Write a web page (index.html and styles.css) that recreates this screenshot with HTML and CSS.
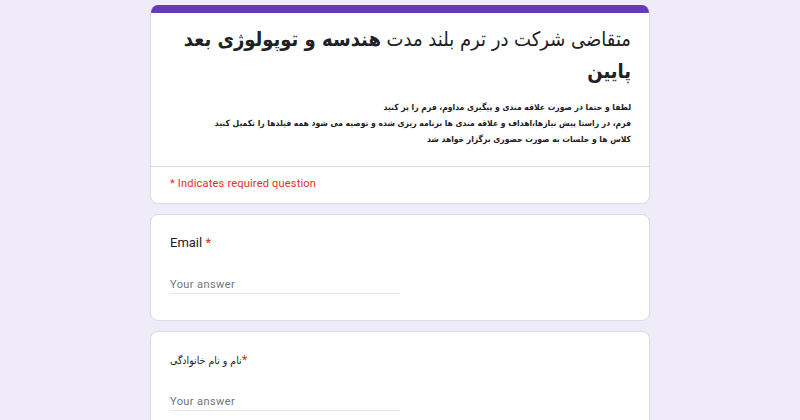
FILE: index.html
```html
<!DOCTYPE html>
<html lang="fa">
<head>
<meta charset="utf-8">
<title>Form</title>
<link rel="stylesheet" href="styles.css">
</head>
<body>
<main class="form">
  <section class="card header-card">
    <div class="accent"></div>
    <div class="header-body">
      <h1 class="title" dir="rtl">متقاضی شرکت در ترم بلند مدت <b>هندسه و توپولوژی بعد پایین</b></h1>
      <div class="desc" dir="rtl">
        <p>لطفا و حتما در صورت علاقه مندی و پیگیری مداوم، فرم را پر کنید</p>
        <p>فرم، در راستا پیش نیازها،اهداف و علاقه مندی ها برنامه ریزی شده و توصیه می شود همه فیلدها را تکمیل کنید</p>
        <p>کلاس ها و جلسات به صورت حضوری برگزار خواهد شد</p>
      </div>
    </div>
    <div class="required-note">* Indicates required question</div>
  </section>

  <section class="card question">
    <div class="label">Email <span class="star">*</span></div>
    <div class="answer"><span class="placeholder">Your answer</span></div>
  </section>

  <section class="card question">
    <div class="label"><span class="fa">نام و نام خانوادگی</span><span class="star">*</span></div>
    <div class="answer"><span class="placeholder">Your answer</span></div>
  </section>
</main>
</body>
</html>
```

FILE: styles.css
```css
html, body {
  margin: 0;
  padding: 0;
}
body {
  background: #f0ebf8;
  font-family: Roboto, "Liberation Sans", sans-serif;
  color: #202124;
  height: 420px;
  overflow: hidden;
}
.form {
  width: 500px;
  margin: 0 auto;
  padding-top: 5px;
  display: flex;
  flex-direction: column;
  gap: 10px;
}
.card {
  background: #fff;
  border: 1px solid #dadce0;
  border-radius: 8px;
  box-sizing: border-box;
}
.header-card {
  overflow: hidden;
  border-top: none;
}
.accent {
  height: 8px;
  background: #673ab7;
}
.header-body {
  padding: 10px 18px 19px 19px;
  border-bottom: 1px solid #dadce0;
}
.title {
  margin: 0;
  font-family: "DejaVu Sans Condensed", "DejaVu Sans", sans-serif;
  font-weight: normal;
  font-size: 20px;
  line-height: 32px;
  color: #202124;
  text-align: right;
}
.title b {
  font-weight: bold;
}
.desc {
  margin-top: 12px;
  font-family: "DejaVu Sans Condensed", "DejaVu Sans", sans-serif;
  font-weight: bold;
  font-size: 8.5px;
  line-height: 16px;
  color: #202124;
  text-align: right;
}
.desc p {
  margin: 0;
}
.required-note {
  padding: 10px 19px 12px;
  font-size: 11px;
  line-height: 14px;
  color: #d93025;
  letter-spacing: 0.2px;
}
.question {
  padding: 19px 19px 26px;
}
.label {
  font-size: 13px;
  line-height: 18px;
  color: #202124;
}
.label .fa {
  font-family: "DejaVu Sans Condensed", "DejaVu Sans", sans-serif;
  font-size: 10.5px;
}
.star {
  color: #d93025;
}
.answer {
  margin-top: 21px;
  width: 230px;
  border-bottom: 1px solid #e6e6e6;
  padding-bottom: 1px;
}
.placeholder {
  font-size: 11px;
  line-height: 14px;
  color: #70757a;
  letter-spacing: 0.4px;
}
```
